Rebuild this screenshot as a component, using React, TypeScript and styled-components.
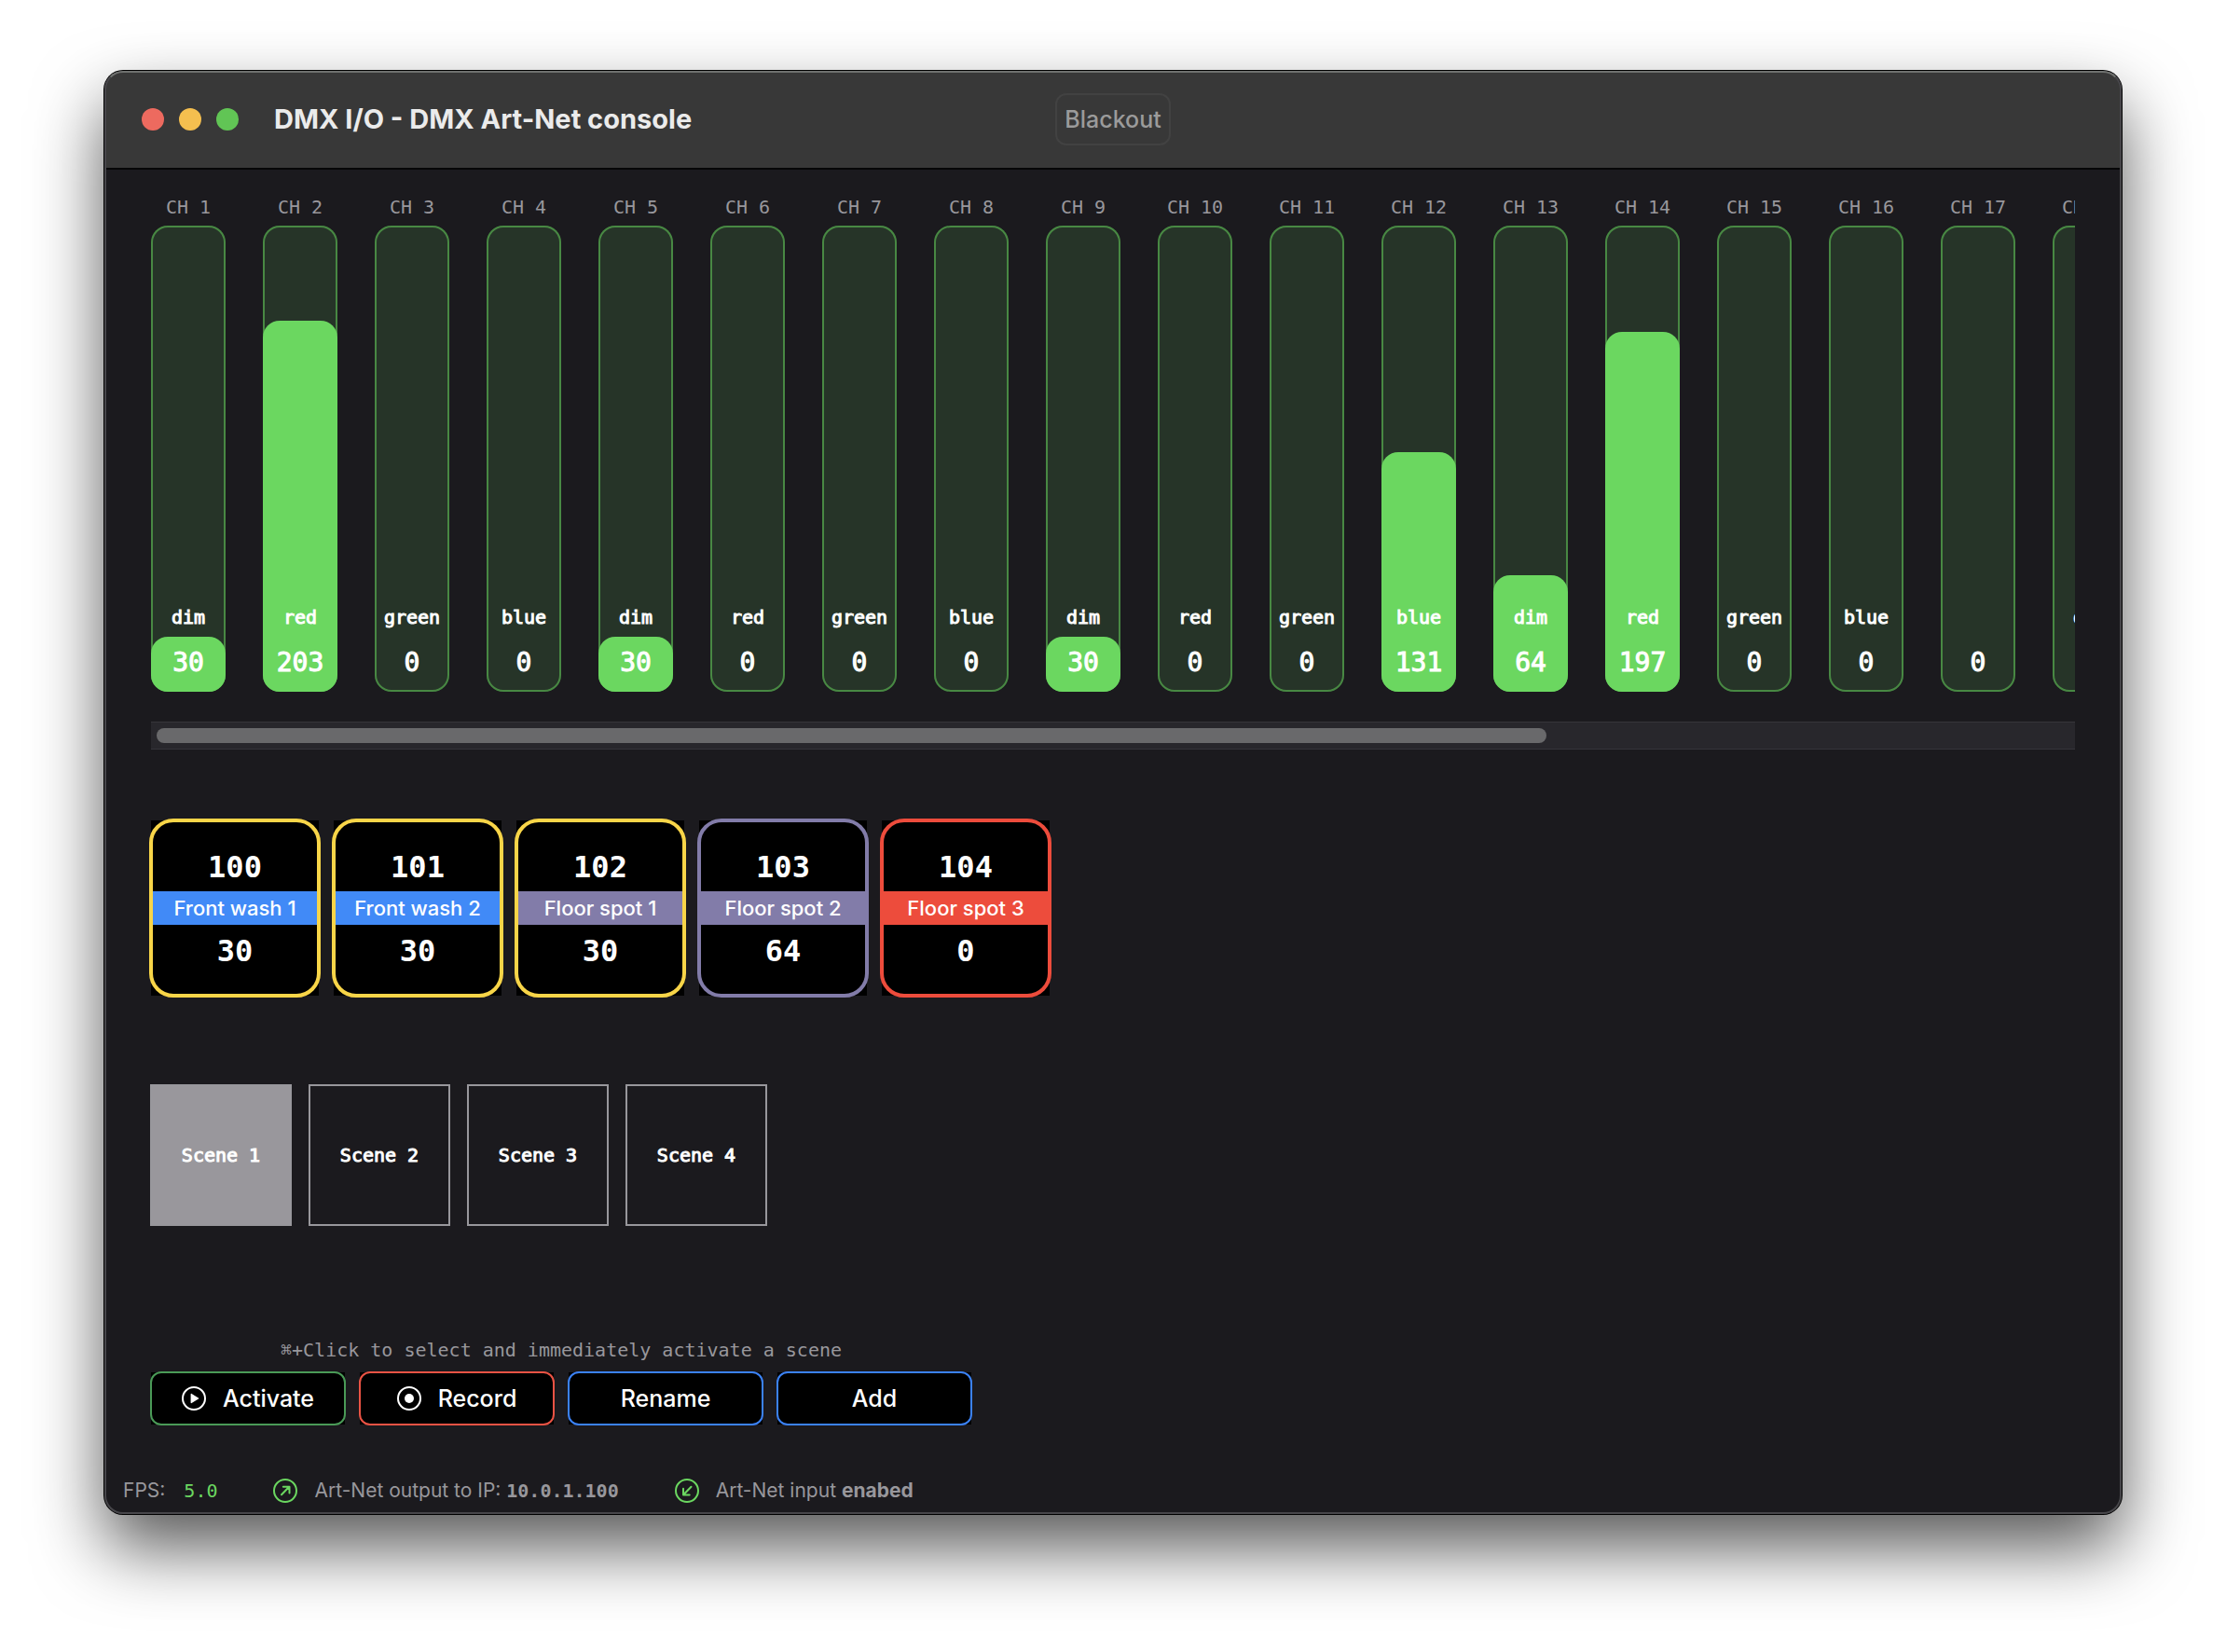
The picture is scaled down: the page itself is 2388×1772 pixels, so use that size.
import React, { useLayoutEffect, useRef, useState } from "react";
import styled, { createGlobalStyle } from "styled-components";

const sans = `Inter, "Liberation Sans", sans-serif`;
const mono = `"DejaVu Sans Mono", "Liberation Mono", monospace`;

const color = {
  body: "#1b1a1e",
  muted: "#98979c",
  green: "#6bd760",
  blue: "#418af7",
  purple: "#827ca9",
  red: "#ed4c3c",
  yellow: "#f8d548",
};

const GlobalStyle = createGlobalStyle`
  *, *::before, *::after { box-sizing: border-box; }
  body { margin: 0; background: #fff; font-family: ${sans}; }
  button { font: inherit; color: inherit; cursor: pointer; }
`;

const Desktop = styled.div`
  display: flex;
  min-height: 100vh;
  padding: 76px 112px 148px;
`;

const Window = styled.main`
  position: relative;
  display: flex;
  flex: 1;
  min-width: 0;
  flex-direction: column;
  border-radius: 20px;
  background: ${color.body};
  color: #fff;
  box-shadow: 0 0 0 1px #000, 0 36px 74px rgba(0, 0, 0, 0.66);

  &::after {
    content: "";
    position: absolute;
    inset: 0;
    border: 2px solid #47464a;
    border-top-color: #6f716f;
    border-radius: 20px;
    pointer-events: none;
  }
`;

const TitleBar = styled.header`
  display: grid;
  grid-template-columns: 1fr auto 1fr;
  align-items: center;
  height: 106px;
  padding: 0 40px;
  border-bottom: 2px solid #060607;
  border-radius: 20px 20px 0 0;
  background: #383838;
`;

const TitleGroup = styled.div`
  display: flex;
  align-items: center;
  gap: 38px;
`;

const Lights = styled.div`
  display: flex;
  gap: 16px;
`;

const Light = styled.button<{ $color: string }>`
  width: 24px;
  height: 24px;
  padding: 0;
  border: 0;
  border-radius: 50%;
  background: ${(p) => p.$color};
`;

const Title = styled.h1`
  margin: 0;
  color: #ebebeb;
  font-size: 29px;
  font-weight: 700;
  line-height: 38px;
  white-space: nowrap;
`;

const BlackoutButton = styled.button`
  height: 56px;
  padding: 0 8px;
  border: 2px solid #424242;
  border-radius: 12px;
  background: transparent;
  color: #9b9b9b;
  font-size: 25px;
  font-weight: 500;
`;

const Body = styled.div`
  display: flex;
  flex-direction: column;
  padding: 28px 50px 0;
`;

const ChannelStrip = styled.div`
  overflow-x: auto;
  scrollbar-width: none;
`;

const ChannelRow = styled.div`
  display: flex;
  gap: 40px;
`;

const ChannelColumn = styled.div`
  display: flex;
  flex: none;
  flex-direction: column;
  align-items: center;
  gap: 8px;
  width: 80px;
`;

const ChannelLabel = styled.label`
  color: ${color.muted};
  font: 20px/24px ${mono};
  white-space: nowrap;
`;

const Fader = styled.div`
  position: relative;
  display: flex;
  flex-direction: column;
  justify-content: flex-end;
  align-items: center;
  gap: 19px;
  width: 80px;
  height: 500px;
  padding-bottom: 13px;
  border-radius: 18px;
  background: #263428;
  box-shadow: inset 0 0 0 2px #488843;
`;

const FaderFill = styled.div`
  position: absolute;
  inset: auto 0 0;
  border-radius: 18px;
  background: ${color.green};
`;

const FaderName = styled.span`
  position: relative;
  font: 20px/24px ${mono};
  -webkit-text-stroke: 1px #fff;
`;

const FaderValue = styled.span`
  position: relative;
  font: 28px/36px ${mono};
  -webkit-text-stroke: 1px #fff;
`;

const FaderInput = styled.input`
  position: absolute;
  inset: 0;
  width: 100%;
  height: 100%;
  margin: 0;
  opacity: 0;
  writing-mode: vertical-lr;
  direction: rtl;
  cursor: ns-resize;
`;

const ScrollTrack = styled.div`
  display: flex;
  height: 30px;
  margin-top: 32px;
  padding: 6px;
  border: solid #36353a;
  border-width: 1px 0;
  background: #28272c;
`;

const ScrollThumb = styled.div`
  border-radius: 8px;
  background: #69696b;
`;

const Fixtures = styled.section`
  display: flex;
  flex-wrap: wrap;
  gap: 16px;
  margin-top: 76px;
`;

const FixtureCard = styled.button<{ $ring: string }>`
  position: relative;
  display: flex;
  flex-direction: column;
  width: 180px;
  height: 188px;
  padding: 30px 0 0;
  border: 0;
  background: #000;

  &::after {
    content: "";
    position: absolute;
    inset: -2px;
    border: 4px solid ${(p) => p.$ring};
    border-radius: 26px;
  }
`;

const FixtureNumber = styled.span`
  font: bold 32px/40px ${mono};
`;

const FixtureName = styled.span<{ $fill: string }>`
  margin: 6px 0 8px;
  background: ${(p) => p.$fill};
  font-size: 22px;
  font-weight: 500;
  line-height: 36px;
`;

const Scenes = styled.section`
  display: flex;
  flex-wrap: wrap;
  gap: 20px;
  margin-top: 96px;
`;

const SceneButton = styled.button<{ $active: boolean }>`
  width: 150px;
  height: 150px;
  padding: 0;
  border: 0;
  outline: 2px solid ${color.muted};
  outline-offset: -1px;
  background: ${(p) => (p.$active ? "#99979c" : "transparent")};
  font: 20px/24px ${mono};
  -webkit-text-stroke: 1px #fff;
`;

const ActionPanel = styled.section`
  display: flex;
  flex-direction: column;
  align-self: flex-start;
  align-items: center;
  gap: 12px;
  margin-top: 122px;
`;

const Hint = styled.p`
  margin: 0;
  color: ${color.muted};
  font: 20px/24px ${mono};
`;

const Actions = styled.div`
  display: flex;
  gap: 16px;
`;

const ActionButton = styled.button<{ $ring: string }>`
  position: relative;
  display: flex;
  justify-content: center;
  align-items: center;
  gap: 18px;
  width: 208px;
  height: 56px;
  padding: 0;
  border: 0;
  background: #000;
  font-size: 25px;
  font-weight: 500;

  &::after {
    content: "";
    position: absolute;
    inset: -1px;
    border: 2px solid ${(p) => p.$ring};
    border-radius: 12px;
  }
`;

const StatusBar = styled.footer`
  display: flex;
  align-items: center;
  gap: 60px;
  height: 34px;
  margin: auto 20px 8px;
  color: ${color.muted};
  font-size: 21px;
  line-height: 24px;
`;

const StatusItem = styled.div<{ $gap: number }>`
  display: flex;
  align-items: center;
  gap: ${(p) => p.$gap}px;
  white-space: nowrap;
`;

const Fps = styled.span`
  color: ${color.green};
  font: 20px/24px ${mono};
`;

const Address = styled.b`
  font-family: ${mono};
  font-size: 20px;
`;

const Icon = styled.svg`
  flex: none;
  width: 28px;
  height: 28px;
  margin: -1px;
  fill: none;
`;

const PlayIcon = () => (
  <Icon viewBox="0 0 28 28" aria-hidden="true">
    <circle cx="14" cy="14" r="12" stroke="#fff" strokeWidth="2" />
    <path d="M10.6 9.4v9.2c0 .6.5.8 1 .5l7.3-4.5c.5-.3.5-.9 0-1.2l-7.3-4.5c-.5-.3-1-.1-1 .5z" fill="#fff" />
  </Icon>
);

const RecordIcon = () => (
  <Icon viewBox="0 0 28 28" aria-hidden="true">
    <circle cx="14" cy="14" r="12" stroke="#fff" strokeWidth="2" />
    <circle cx="14" cy="14" r="5" fill="#fff" />
  </Icon>
);

const OutputIcon = () => (
  <Icon viewBox="0 0 28 28" aria-hidden="true" stroke={color.green} strokeWidth="2" strokeLinecap="round" strokeLinejoin="round">
    <circle cx="14" cy="14" r="12" />
    <path d="M10 18.2l8-8.2M11.8 9.7h6.7v6.7" />
  </Icon>
);

const InputIcon = () => (
  <Icon viewBox="0 0 28 28" aria-hidden="true" stroke={color.green} strokeWidth="2" strokeLinecap="round" strokeLinejoin="round">
    <circle cx="14" cy="14" r="12" />
    <path d="M18.5 9.8l-8 8.2M10 11.8v6.7h6.7" />
  </Icon>
);

const parameters = [
  "dim", "red", "green", "blue",
  "dim", "red", "green", "blue",
  "dim", "red", "green", "blue",
  "dim", "red", "green", "blue",
  "", "dim", "red", "green", "blue",
  "", "", "",
];

const initialLevels = [
  30, 203, 0, 0, 30, 0, 0, 0, 30, 0, 0, 131,
  64, 197, 0, 0, 0, 0, 0, 0, 0, 0, 0, 0,
];

const fixtures = [
  { id: 100, name: "Front wash 1", value: 30, ring: color.yellow, fill: color.blue },
  { id: 101, name: "Front wash 2", value: 30, ring: color.yellow, fill: color.blue },
  { id: 102, name: "Floor spot 1", value: 30, ring: color.yellow, fill: color.purple },
  { id: 103, name: "Floor spot 2", value: 64, ring: color.purple, fill: color.purple },
  { id: 104, name: "Floor spot 3", value: 0, ring: color.red, fill: color.red },
];

const scenes = ["Scene 1", "Scene 2", "Scene 3", "Scene 4"];

// Column width plus gap; only the columns inside the viewport are mounted.
const PITCH = 120;
const TOTAL_WIDTH = initialLevels.length * PITCH - 40;

function Channels() {
  const strip = useRef<HTMLDivElement>(null);
  const [levels, setLevels] = useState(initialLevels);
  const [view, setView] = useState({ left: 0, width: TOTAL_WIDTH });

  const measure = () => {
    const el = strip.current;
    if (el) setView({ left: el.scrollLeft, width: Math.min(el.clientWidth, TOTAL_WIDTH) });
  };

  useLayoutEffect(() => {
    measure();
    window.addEventListener("resize", measure);
    return () => window.removeEventListener("resize", measure);
  }, []);

  const setLevel = (index: number, value: number) =>
    setLevels((all) => all.map((v, i) => (i === index ? value : v)));

  const first = Math.floor(view.left / PITCH);
  const last = Math.ceil((view.left + view.width) / PITCH);

  return (
    <section>
      <ChannelStrip ref={strip} onScroll={measure}>
        <ChannelRow style={{ width: TOTAL_WIDTH, paddingLeft: first * PITCH }}>
          {levels.slice(first, last).map((level, offset) => {
            const i = first + offset;
            return (
              <ChannelColumn key={i}>
                <ChannelLabel htmlFor={`channel-${i + 1}`}>CH {i + 1}</ChannelLabel>
                <Fader>
                  <FaderFill style={{ height: `${(level / 255) * 100}%` }} />
                  {parameters[i] && <FaderName>{parameters[i]}</FaderName>}
                  <FaderValue>{level}</FaderValue>
                  <FaderInput
                    id={`channel-${i + 1}`}
                    type="range"
                    min={0}
                    max={255}
                    value={level}
                    onChange={(e) => setLevel(i, Number(e.target.value))}
                  />
                </Fader>
              </ChannelColumn>
            );
          })}
        </ChannelRow>
      </ChannelStrip>
      <ScrollTrack>
        <ScrollThumb
          style={{
            width: `${(view.width / TOTAL_WIDTH) * 100}%`,
            marginLeft: `${(view.left / TOTAL_WIDTH) * 100}%`,
          }}
        />
      </ScrollTrack>
    </section>
  );
}

export default function App() {
  const [scene, setScene] = useState(0);

  return (
    <>
      <GlobalStyle />
      <Desktop>
        <Window>
          <TitleBar>
            <TitleGroup>
              <Lights>
                <Light $color="#ed6a5f" aria-label="Close" />
                <Light $color="#f5bf4f" aria-label="Minimize" />
                <Light $color="#61c555" aria-label="Zoom" />
              </Lights>
              <Title>DMX I/O - DMX Art-Net console</Title>
            </TitleGroup>
            <BlackoutButton>Blackout</BlackoutButton>
          </TitleBar>

          <Body>
            <Channels />

            <Fixtures>
              {fixtures.map((f) => (
                <FixtureCard key={f.id} $ring={f.ring}>
                  <FixtureNumber>{f.id}</FixtureNumber>
                  <FixtureName $fill={f.fill}>{f.name}</FixtureName>
                  <FixtureNumber>{f.value}</FixtureNumber>
                </FixtureCard>
              ))}
            </Fixtures>

            <Scenes>
              {scenes.map((name, i) => (
                <SceneButton key={name} $active={i === scene} onClick={() => setScene(i)}>
                  {name}
                </SceneButton>
              ))}
            </Scenes>

            <ActionPanel>
              <Hint>⌘+Click to select and immediately activate a scene</Hint>
              <Actions>
                <ActionButton $ring="#4a9a57">
                  <PlayIcon />
                  Activate
                </ActionButton>
                <ActionButton $ring="#ea5344">
                  <RecordIcon />
                  Record
                </ActionButton>
                <ActionButton $ring="#3b82f6">Rename</ActionButton>
                <ActionButton $ring="#3b82f6">Add</ActionButton>
              </Actions>
            </ActionPanel>
          </Body>

          <StatusBar>
            <StatusItem $gap={20}>
              FPS: <Fps>5.0</Fps>
            </StatusItem>
            <StatusItem $gap={18}>
              <OutputIcon />
              <span>
                Art-Net output to IP: <Address>10.0.1.100</Address>
              </span>
            </StatusItem>
            <StatusItem $gap={18}>
              <InputIcon />
              <span>
                Art-Net input <b>enabed</b>
              </span>
            </StatusItem>
          </StatusBar>
        </Window>
      </Desktop>
    </>
  );
}
